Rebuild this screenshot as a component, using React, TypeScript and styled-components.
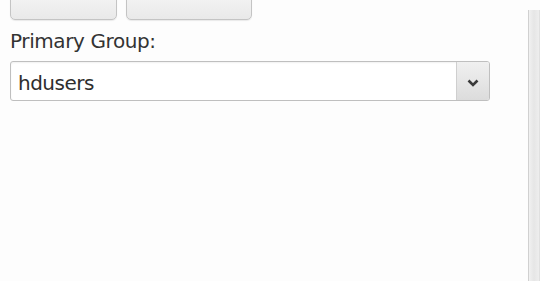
import React from "react";
import styled, { createGlobalStyle } from "styled-components";

const Global = createGlobalStyle`
  html, body { margin: 0; padding: 0; background: #fdfdfd; }
  body { font-family: "DejaVu Sans", Verdana, sans-serif; }
`;

const Page = styled.div`
  width: 540px;
  height: 281px;
  display: flex;
  overflow: hidden;
  background: #fdfdfd;
`;

const Panel = styled.div`
  flex: 1;
  padding: 0 0 0 10px;
  display: flex;
  flex-direction: column;
`;

const ButtonRow = styled.div`
  display: flex;
  gap: 9px;
  margin-top: -10px;
`;

const Btn = styled.div<{ $w: number }>`
  width: ${(p) => p.$w}px;
  height: 30px;
  box-sizing: border-box;
  border: 1px solid #c4c4c4;
  border-radius: 5px;
  background: linear-gradient(#f6f6f6, #e9e9e9);
  box-shadow: 0 1px 1px rgba(0, 0, 0, 0.08);
`;

const Label = styled.div`
  margin-top: 9px;
  font-size: 20px;
  line-height: 24px;
  color: #333;
  letter-spacing: -0.4px;
`;

const Select = styled.div`
  margin-top: 8px;
  width: 480px;
  height: 40px;
  box-sizing: border-box;
  border: 1px solid #bfbfbf;
  border-radius: 3px;
  background: #fff;
  display: flex;
  box-shadow: inset 0 1px 2px rgba(0, 0, 0, 0.06);
`;

const Value = styled.div`
  flex: 1;
  padding: 4px 0 0 7px;
  display: flex;
  align-items: center;
  font-size: 20px;
  letter-spacing: -0.5px;
  color: #2e2e2e;
`;

const Arrow = styled.div`
  width: 32px;
  padding-top: 3px;
  border-left: 1px solid #cfcfcf;
  background: linear-gradient(#f0f0f0, #dcdcdc);
  display: flex;
  align-items: center;
  justify-content: center;
  border-radius: 0 2px 2px 0;
`;

const Track = styled.div`
  width: 12px;
  margin: 10px 0 0 0;
  box-sizing: border-box;
  border-left: 1px solid #d0d0d0;
  border-right: 1px solid #e0e0e0;
  background: linear-gradient(90deg, #f1f1f1, #e6e6e6 50%, #eeeeee);
`;

export default function App() {
  return (
    <>
      <Global />
      <Page>
        <Panel>
          <ButtonRow>
            <Btn $w={107} />
            <Btn $w={126} />
          </ButtonRow>
          <Label>Primary Group:</Label>
          <Select>
            <Value>hdusers</Value>
            <Arrow>
              <svg width="12" height="8" viewBox="0 0 12 8">
                <path d="M1.5 1.5 L6 6 L10.5 1.5" fill="none" stroke="#3a3a3a" strokeWidth="2.6" />
              </svg>
            </Arrow>
          </Select>
        </Panel>
        <Track />
      </Page>
    </>
  );
}
